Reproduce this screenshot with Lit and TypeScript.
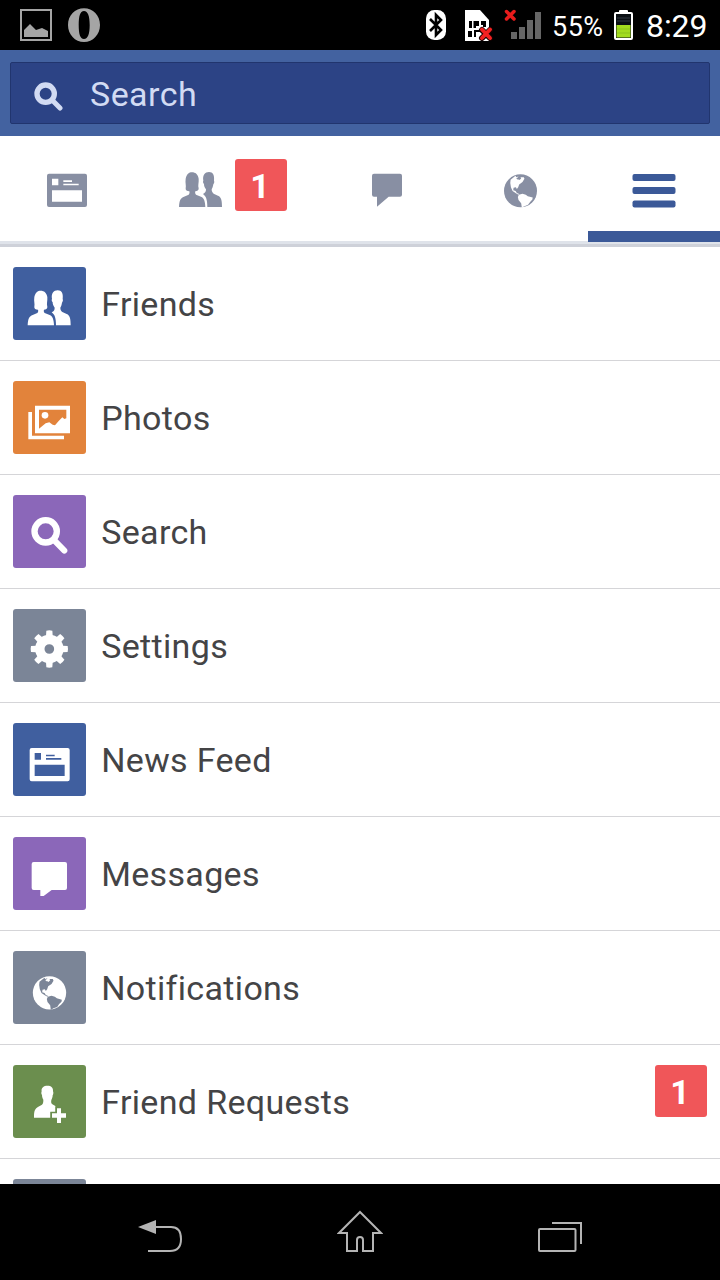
import { LitElement, html, svg, css } from "lit";
import { customElement, property } from "lit/decorators.js";

/* Shared glyph artwork, drawn in currentColor with cut-outs in --cut. */
const people = svg`
  <path d="M0 105C1 84 5 78 15 74L29 68C32 65 32 61 31 58C24 57 19 55 20 49C22 40 18 33 20 20C23 6 30 1 39 1C49 1 57 7 59 20C60 32 56 40 59 49C60 55 54 57 49 58C48 61 48 65 51 68L66 74C75 78 78 86 79 105Z"/>
  <path d="M85 105C85 82 81 73 72 66C79 63 81 58 81 52C77 47 75 42 75 36C71 31 72 28 73 26C70 10 78 0 90 0C102 0 107 10 105 26C107 30 105 34 103 37C102 44 100 48 98 52C98 58 100 62 104 65L117 71C127 75 129 85 129 105Z"/>`;

const feed = svg`
  <path fill-rule="evenodd" d="M6 0H114Q120 0 120 6V94Q120 100 114 100H6Q0 100 0 94V6Q0 0 6 0ZM15 15V35H34V15ZM49 20V25H75V20ZM49 30V35H95V30ZM15 50V84H105V50Z"/>`;

const globe = svg`
  <circle cx="50" cy="50.5" r="50"/>
  <path fill="var(--cut)" d="M20 17L35 5L37 9L44 7L40 12L47 18L52 13L50 9L60 9L62 14L56 24L46 31L43 40L39 45L36 40L29 41L28 49L35 51L39 57L46 60L44 62L36 58L26 51L21 40L19 27Z"/>
  <path fill="var(--cut)" d="M45 62L56 59L66 62L72 67L87 71L86 77L79 84L73 93L62 97L54 101L52 88L44 78L42 69Z"/>
  <path d="M37 12L43 10L45 16L41 16Z"/>`;

const gearTeeth = [0, 45, 90, 135, 180, 225, 270, 315];

const tileArt: Record<string, unknown> = {
  friends: svg`<g transform="translate(44 70)">${people}</g>`,
  photos: svg`
    <path d="M46 93H57V164H153V175H46Z"/>
    <path fill-rule="evenodd" d="M66 74H171V157H66ZM78 86V143L88 135L98 127L109 124L119 131L126 133L137 120L148 109L154 114L160 112V86Z"/>
    <circle cx="96" cy="103" r="10"/>`,
  search: svg`
    <circle cx="98" cy="109" r="33.500" fill="none" stroke="currentColor" stroke-width="19"/>
    <path d="M124 136L154 167" stroke="currentColor" stroke-width="18" stroke-linecap="round"/>`,
  settings: svg`
    <circle cx="109" cy="120" r="28.500" fill="none" stroke="currentColor" stroke-width="28"/>
    ${gearTeeth.map(
      (a) => svg`<path transform="rotate(${a} 109 120)" d="M99 80L100 65Q109 63 118 65L119 80Z"/>`
    )}`,
  feed: svg`<g transform="translate(50 75)">${feed}</g>`,
  messages: svg`<path d="M62 75H156Q162 75 162 81V153Q162 159 156 159H116L92 177H82V159H62Q56 159 56 153V81Q56 75 62 75Z"/>`,
  notifications: svg`<g transform="translate(59.5 75)">${globe}</g>`,
  requests: svg`
    <path d="M63 158C63 136 66 131 76 125L87 119C91 115 91 110 91 104C88 99 87 95 87 90C84 87 85 82 86 79C84 68 93 62 103 62C115 62 121 68 120 79C122 83 121 88 119 91C119 97 117 101 115 105C114 111 114 115 118 118L127 123V126V140H112V158Z"/>
    <path fill="var(--cut)" d="M128 126H148V141H163V162H148V178H128V162H113V141H128Z"/>
    <path d="M132 130H144V145H159V158H144V174H132V158H117V145H132Z"/>`,
};

@customElement("status-bar")
export class StatusBar extends LitElement {
  static styles = css`
    :host {
      display: flex;
      justify-content: space-between;
      height: 50px;
      background: #000;
      color: #fff;
    }
    .group {
      display: flex;
      align-items: flex-start;
    }
    .left {
      padding-left: 20px;
      gap: 16px;
    }
    .right {
      padding-right: 9px;
    }
    svg {
      display: block;
    }
    .percent {
      width: 63px;
      padding-left: 10px;
      font-size: 27px;
      line-height: 54px;
      letter-spacing: 0.5px;
      white-space: nowrap;
      box-sizing: border-box;
    }
    .clock {
      width: 65px;
      padding-left: 11px;
      margin-left: 0;
      font-size: 32px;
      line-height: 53px;
      letter-spacing: -0.1px;
      white-space: nowrap;
    }
  `;
  render() {
    return html`
      <div class="group left">
        <svg width="32" height="50" viewBox="0 0 32 50">
          <path d="M1 10H31V40H1Z" fill="none" stroke="#a5a5a5" stroke-width="2" />
          <path d="M4 37V30L10 24L16 30L22 28L28 31V37Z" fill="#a5a5a5" />
        </svg>
        <svg width="32" height="50" viewBox="0 0 32 50">
          <path
            fill="#a5a5a5"
            fill-rule="evenodd"
            d="M16 8.300C25 8.300 32 15.500 32 25S25 42 16 42S0 34.500 0 25S7 8.300 16 8.300ZM16 11C12 11 10.700 16.500 10.700 25S12 39 16 39S21.700 33.500 21.700 25S20 11 16 11Z"
          />
        </svg>
      </div>
      <div class="group right">
        <svg width="117" height="50" viewBox="425 0 117 50">
          <rect x="426" y="10" width="20" height="30" rx="8.500" fill="#fff" />
          <path d="M430 19L441 30L436 35V15L441 20L430 31" fill="none" stroke="#000" stroke-width="2.600" />
          <path d="M465 10H480L489 20V41H465Z" fill="#fff" />
          <path
            d="M469 21H472V28H469ZM473.500 21H479V26H476V28H473.500ZM481 21H486V27H483V25H481ZM468 31H472V37H468ZM474 30H481V32H476V37H474Z"
            fill="#000"
          />
          <path d="M482 30L490 38M490 30L482 38" stroke="#180000" stroke-width="6" stroke-linecap="round" />
          <path d="M482 29.500L490 38M490 29.500L482 38" stroke="#f32121" stroke-width="4" stroke-linecap="round" />
          <path d="M506.500 11.500L514 19M514 11.500L506.500 19" stroke="#e81c1c" stroke-width="3.500" stroke-linecap="round" />
          <path d="M511 32H517V39H511ZM519 27H525V39H519ZM527 20H533V39H527ZM535 12H541V39H535Z" fill="#666" />
        </svg>
        <div class="percent">55%</div>
        <svg width="30" height="50" viewBox="605 0 30 50">
          <rect x="619" y="10" width="9" height="4" rx="1" fill="#fff" />
          <rect x="615" y="13" width="17" height="26" rx="1" fill="#0a0f14" stroke="#fff" stroke-width="2" />
          <path d="M617 18H630M617 21H630" stroke="#303840" />
          <rect x="616.500" y="25" width="14" height="12.500" fill="#a3dc1e" />
          <path d="M617 29H630M617 33H630" stroke="#8bc41c" />
        </svg>
        <div class="clock">8:29</div>
      </div>
    `;
  }
}

@customElement("search-header")
export class SearchHeader extends LitElement {
  static styles = css`
    :host {
      display: block;
      height: 86px;
      padding: 12px 10px;
      box-sizing: border-box;
      background: #4362a0;
    }
    .field {
      display: flex;
      align-items: center;
      height: 62px;
      box-sizing: border-box;
      border: 1px solid #21356e;
      border-radius: 2px;
      background: #2c4385;
      color: #d2dbf3;
      font-size: 34px;
      letter-spacing: 0.45px;
    }
    svg {
      display: block;
      margin: 7px 27px 0 23px;
      fill: currentColor;
    }
    .hint {
      line-height: 60px;
      margin-top: 2px;
    }
  `;
  render() {
    return html`<div class="field">
      <svg width="29" height="29" viewBox="0 0 87 87">
        <circle cx="35" cy="35" r="26" fill="none" stroke="currentColor" stroke-width="16" />
        <path d="M55 55L78 78" stroke="currentColor" stroke-width="15" stroke-linecap="round" />
      </svg>
      <span class="hint">Search</span>
    </div>`;
  }
}

@customElement("count-badge")
export class CountBadge extends LitElement {
  @property({ type: Number }) count = 0;
  static styles = css`
    :host {
      display: block;
      width: 52px;
      height: 52px;
      padding-right: 2px;
      box-sizing: border-box;
      border-radius: 3px;
      background: #f05659;
      color: #fff;
      font-size: 34px;
      font-weight: 700;
      line-height: 54px;
      text-align: center;
    }
  `;
  render() {
    return html`${this.count}`;
  }
}

@customElement("tab-strip")
export class TabStrip extends LitElement {
  static styles = css`
    :host {
      display: block;
      height: 111px;
      box-sizing: border-box;
      color: #888fa3;
      --cut: #fff;
      background: #fff;
    }
    .tabs {
      display: grid;
      grid-template-columns: 134px 186px 134px 134px 132px;
      height: 105px;
    }
    .tab {
      display: flex;
      align-items: flex-start;
      justify-content: center;
      padding-top: 37px;
    }
    .wide {
      justify-content: flex-start;
      padding: 23px 0 0 45px;
      gap: 13px;
    }
    .wide svg {
      margin-top: 13px;
    }
    .globe {
      padding-right: 2px;
    }
    .active {
      position: relative;
      margin-bottom: -1px;
      color: #3b5998;
      border-bottom: 11px solid #3b5998;
    }
    .line {
      height: 3px;
      background: #dfe3ea;
      border-bottom: 3px solid #ced1d9;
    }
    svg {
      display: block;
      fill: currentColor;
    }
  `;
  render() {
    return html`
      <div class="tabs">
        <div class="tab"><svg width="40" height="34" viewBox="0 -2 120 102">${feed}</svg></div>
        <div class="tab wide">
          <svg width="43" height="35" viewBox="0 0 129 105">${people}</svg>
          <count-badge .count=${1}></count-badge>
        </div>
        <div class="tab">
          <svg width="30" height="34" viewBox="0 -2 90 102">
            <path d="M6 0H84Q90 0 90 6V63Q90 69 84 69H50L15 99V69H6Q0 69 0 63V6Q0 0 6 0Z" />
          </svg>
        </div>
        <div class="tab globe"><svg width="33" height="35" viewBox="0 -3 100 105">${globe}</svg></div>
        <div class="tab active">
          <svg width="44" height="35" viewBox="0 0 44 35">
            <rect x="0.500" y="1" width="43" height="7" rx="2" />
            <rect x="0.500" y="14" width="43" height="7" rx="2" />
            <rect x="0.500" y="27.500" width="43" height="7" rx="2" />
          </svg>
        </div>
      </div>
      <div class="line"></div>
    `;
  }
}

@customElement("menu-row")
export class MenuRow extends LitElement {
  @property() icon = "";
  @property() label = "";
  @property() tone = "";
  @property({ type: Number }) count = 0;
  static styles = css`
    :host {
      display: flex;
      align-items: flex-start;
      flex: none;
      height: 114px;
      padding: 20px 13px 0;
      box-sizing: border-box;
      border-bottom: 1px solid #d5d5d8;
      background: #fff;
    }
    .tile {
      width: 73px;
      height: 73px;
      border-radius: 3px;
      color: #fff;
      background: var(--cut);
    }
    .blue {
      --cut: #405f9f;
    }
    .orange {
      --cut: #e2833b;
    }
    .purple {
      --cut: #8b67b9;
    }
    .slate {
      --cut: #7b8597;
    }
    .green {
      --cut: #6b8e4e;
    }
    svg {
      display: block;
      fill: currentColor;
    }
    .label {
      flex: 1;
      padding-left: 15.2px;
      font-size: 34px;
      line-height: 75px;
      letter-spacing: 0.34px;
      color: #444446;
      white-space: nowrap;
    }
  `;
  render() {
    return html`
      <div class="tile ${this.tone}">
        <svg width="73" height="73" viewBox="0 0 219 219">${tileArt[this.icon]}</svg>
      </div>
      <div class="label">${this.label}</div>
      ${this.count ? html`<count-badge .count=${this.count}></count-badge>` : ""}
    `;
  }
}

@customElement("nav-bar")
export class NavBar extends LitElement {
  static styles = css`
    :host {
      display: flex;
      justify-content: space-between;
      height: 96px;
      padding: 0 137px;
      box-sizing: border-box;
      background: #000;
    }
    svg {
      display: block;
      fill: none;
      stroke: #b4b4b4;
      stroke-width: 2;
    }
  `;
  render() {
    return html`
      <svg width="46" height="96" viewBox="137 1184 46 96">
        <path d="M148 1251H170C178 1251 181 1246 181 1239C181 1231 178 1227 171 1227H155" />
        <path d="M138 1227L156 1220V1234Z" fill="#b4b4b4" stroke="none" />
      </svg>
      <svg width="46" height="96" viewBox="337 1184 46 96">
        <path d="M360 1212L381 1233H373V1251H363V1240Q363 1237 360 1237T357 1240V1251H347V1233H339Z" />
      </svg>
      <svg width="46" height="96" viewBox="537 1184 46 96">
        <rect x="539" y="1229" width="36.500" height="22" rx="1" />
        <path d="M552 1223H581V1244" />
      </svg>
    `;
  }
}

@customElement("app-root")
export class AppRoot extends LitElement {
  static styles = css`
    :host {
      display: flex;
      flex-direction: column;
      width: 720px;
      height: 1280px;
      overflow: hidden;
      background: #fff;
      font-family: Roboto, "Noto Sans", sans-serif;
    }
    status-bar,
    search-header,
    tab-strip,
    nav-bar {
      flex: none;
    }
    .list {
      display: flex;
      flex-direction: column;
      flex: 1;
      min-height: 0;
      overflow: hidden;
    }
  `;
  private rows = [
    { icon: "friends", label: "Friends", tone: "blue" },
    { icon: "photos", label: "Photos", tone: "orange" },
    { icon: "search", label: "Search", tone: "purple" },
    { icon: "settings", label: "Settings", tone: "slate" },
    { icon: "feed", label: "News Feed", tone: "blue" },
    { icon: "messages", label: "Messages", tone: "purple" },
    { icon: "notifications", label: "Notifications", tone: "slate" },
    { icon: "requests", label: "Friend Requests", tone: "green", count: 1 },
    { icon: "", label: "", tone: "slate" },
  ];
  render() {
    return html`
      <status-bar></status-bar>
      <search-header></search-header>
      <tab-strip></tab-strip>
      <div class="list">
        ${this.rows.map(
          (r) => html`<menu-row .icon=${r.icon} .label=${r.label} .tone=${r.tone} .count=${r.count ?? 0}></menu-row>`
        )}
      </div>
      <nav-bar></nav-bar>
    `;
  }
}
